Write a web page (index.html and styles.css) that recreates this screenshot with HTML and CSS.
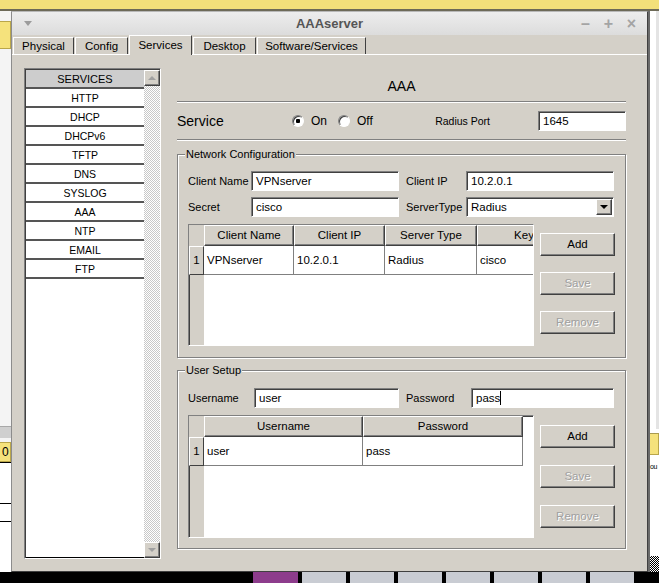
FILE: index.html
```html
<!DOCTYPE html>
<html lang="en">
<head>
    <meta charset="UTF-8">
    <title>AAAserver</title>
    <link rel="stylesheet" href="styles.css">
</head>
<body>
    <div class="topbar"></div>

    <div class="desk">
        <div class="side side-left">
            <div class="side-tag side-tag-top"></div>
            <div class="side-fill"></div>
            <div class="side-band"></div>
            <div class="side-tag">0</div>
            <div class="side-rest"></div>
        </div>

        <div class="window">
            <div class="titlebar">
                <div class="title-left"><span class="title-menu"></span></div>
                <div class="title-text">AAAserver</div>
                <div class="title-controls"><span>&ndash;</span><span>+</span><span>&times;</span></div>
            </div>

            <div class="tabs">
                <div class="tab tab-physical">Physical</div>
                <div class="tab tab-config">Config</div>
                <div class="tab tab-services active">Services</div>
                <div class="tab tab-desktop">Desktop</div>
                <div class="tab tab-software">Software/Services</div>
            </div>

            <div class="content">
                <!-- left service list -->
                <div class="service-list">
                    <div class="list">
                        <div class="list-head">SERVICES</div>
                        <div class="list-item">HTTP</div>
                        <div class="list-item">DHCP</div>
                        <div class="list-item">DHCPv6</div>
                        <div class="list-item">TFTP</div>
                        <div class="list-item">DNS</div>
                        <div class="list-item">SYSLOG</div>
                        <div class="list-item">AAA</div>
                        <div class="list-item">NTP</div>
                        <div class="list-item">EMAIL</div>
                        <div class="list-item">FTP</div>
                    </div>
                    <div class="scrollbar">
                        <div class="scroll-btn"><span class="arrow-up"></span></div>
                        <div class="scroll-btn"><span class="arrow-down"></span></div>
                    </div>
                </div>

                <!-- right settings panel -->
                <div class="panel">
                    <div class="panel-title">AAA</div>
                    <div class="sep"></div>

                    <div class="service-row">
                        <span class="service-label">Service</span>
                        <span class="radio checked"></span>
                        <span class="radio-text">On</span>
                        <span class="radio radio-off"></span>
                        <span class="radio-text">Off</span>
                        <span class="port-label">Radius Port</span>
                        <div class="field port-field">1645</div>
                    </div>
                    <div class="sep"></div>

                    <fieldset class="group group-network">
                        <legend>Network Configuration</legend>
                        <div class="form-row">
                            <span class="lbl lbl-net">Client Name</span>
                            <div class="field field-net">VPNserver</div>
                            <span class="lbl lbl-net2">Client IP</span>
                            <div class="field field-net">10.2.0.1</div>
                        </div>
                        <div class="form-row form-row-last">
                            <span class="lbl lbl-net">Secret</span>
                            <div class="field field-net">cisco</div>
                            <span class="lbl lbl-net2">ServerType</span>
                            <div class="field field-net select">
                                <span class="select-value">Radius</span>
                                <span class="select-btn"><span class="arrow-black"></span></span>
                            </div>
                        </div>
                        <div class="table-row">
                            <div class="grid grid-net">
                                <div class="grid-head">
                                    <div class="hc corner"></div>
                                    <div class="hc col-cname">Client Name</div>
                                    <div class="hc col-cip">Client IP</div>
                                    <div class="hc col-stype">Server Type</div>
                                    <div class="hc col-key">Key</div>
                                </div>
                                <div class="grid-row">
                                    <div class="rh">1</div>
                                    <div class="bc col-cname">VPNserver</div>
                                    <div class="bc col-cip">10.2.0.1</div>
                                    <div class="bc col-stype">Radius</div>
                                    <div class="bc col-key">cisco</div>
                                </div>
                            </div>
                            <div class="btn-col">
                                <div class="btn">Add</div>
                                <div class="btn disabled">Save</div>
                                <div class="btn disabled">Remove</div>
                            </div>
                        </div>
                    </fieldset>

                    <fieldset class="group group-user">
                        <legend>User Setup</legend>
                        <div class="form-row form-row-last">
                            <span class="lbl lbl-user">Username</span>
                            <div class="field field-user">user</div>
                            <span class="lbl lbl-user2">Password</span>
                            <div class="field field-pass">pass<span class="caret"></span></div>
                        </div>
                        <div class="table-row">
                            <div class="grid grid-user">
                                <div class="grid-head">
                                    <div class="hc corner"></div>
                                    <div class="hc col-user">Username</div>
                                    <div class="hc col-pass">Password</div>
                                </div>
                                <div class="grid-row">
                                    <div class="rh">1</div>
                                    <div class="bc col-user">user</div>
                                    <div class="bc col-pass">pass</div>
                                </div>
                            </div>
                            <div class="btn-col btn-col-user">
                                <div class="btn">Add</div>
                                <div class="btn disabled">Save</div>
                                <div class="btn disabled">Remove</div>
                            </div>
                        </div>
                    </fieldset>
                </div>
            </div>
        </div>

        <div class="side side-right">
            <div class="side-fill-right"></div>
            <div class="side-tag side-tag-right"></div>
            <div class="side-text">ou</div>
            <div class="side-rest-right"></div>
            <div class="side-checker"></div>
        </div>
    </div>

    <div class="taskbar">
        <div class="task-gap"></div>
        <div class="thumb thumb-purple"></div>
        <div class="thumb"></div>
        <div class="thumb"></div>
        <div class="thumb"></div>
        <div class="thumb"></div>
        <div class="thumb"></div>
        <div class="thumb"></div>
        <div class="thumb"></div>
    </div>
</body>
</html>
```

FILE: styles.css
```css
:root {
    --face: #d4d0c8;
    --shadow: #808080;
    --dark: #404040;
    --light: #ffffff;
    --text: #000000;
    --disabled: #a0a0a0;
}

* {
    margin: 0;
    padding: 0;
    box-sizing: border-box;
}

body {
    font-family: "Liberation Sans", Arial, sans-serif;
    font-size: 11px;
    color: var(--text);
    background: #000;
    width: 659px;
    height: 583px;
    overflow: hidden;
}

/* desktop around the window */
.topbar {
    height: 11px;
    background: #f3e07a;
    border-bottom: 2px solid #6d6a58;
}

.desk {
    display: flex;
    height: 561px;
}

.side {
    width: 11px;
    display: flex;
    flex-direction: column;
}

.side-left {
    background: #f4f4f4;
}

.side-tag {
    height: 20px;
    margin-top: 4px;
    background: #f5e27c;
    border: 1px solid #b9a64a;
    border-left: none;
    font-size: 12px;
    line-height: 18px;
    padding-left: 2px;
}

.side-tag-top {
    margin-top: 10px;
    height: 28px;
}

.side-fill {
    flex: 1;
}

.side-band {
    height: 12px;
    background: #cfcfcf;
    border-top: 1px solid #a8a8a8;
}

.side-rest {
    height: 110px;
    border-top: 1px solid #000;
    background: linear-gradient(#fff 40px, #000 40px, #000 41px, #fff 41px, #fff 58px, #000 58px, #000 59px, #fff 59px);
}

.side-right {
    background: #fff;
    border-left: 2px solid #6a6a6a;
}

.side-fill-right {
    height: 418px;
    background: linear-gradient(to right, #fff 6px, #e4e4e4 6px);
}

.side-tag-right {
    height: 22px;
    background: #f5e27c;
    border-top: 1px solid #a89a50;
}

.side-text {
    height: 30px;
    font-size: 7px;
    line-height: 24px;
    letter-spacing: -0.5px;
}

.side-rest-right {
    flex: 1;
}

.side-checker {
    height: 16px;
    background: repeating-conic-gradient(#000 0 25%, #fff 0 50%) 0 0 / 2px 2px;
}

.taskbar {
    display: flex;
    height: 11px;
    background: #000;
}

.task-gap {
    width: 253px;
}

.thumb {
    width: 44px;
    margin-right: 4px;
    background: #c9ccd3;
}

.thumb-purple {
    width: 45px;
    background: #8d3c8c;
}

/* window frame */
.window {
    width: 637px;
    display: flex;
    flex-direction: column;
    border: 1px solid;
    border-color: #b8b8b8 var(--dark) var(--dark) #8c8c8c;
    background: var(--face);
}

.titlebar {
    height: 23px;
    display: grid;
    grid-template-columns: 1fr auto 1fr;
    align-items: center;
    background: linear-gradient(#ededed, #dcdcdc);
}

.title-left {
    padding-left: 12px;
    display: flex;
    align-items: center;
}

.title-menu {
    width: 0;
    height: 0;
    border-left: 4px solid transparent;
    border-right: 4px solid transparent;
    border-top: 5px solid #9c9c9c;
}

.title-text {
    font-weight: 700;
    font-size: 13px;
    color: #555;
}

.title-controls {
    display: flex;
    justify-content: flex-end;
    gap: 12px;
    padding-right: 10px;
    color: #a4a4a4;
    font-size: 16px;
    font-weight: 700;
}

.title-controls span {
    width: 11px;
    text-align: center;
}

/* tabs */
.tabs {
    height: 20px;
    display: flex;
    align-items: flex-end;
    padding-left: 1px;
    border-bottom: 1px solid var(--light);
}

.tab {
    height: 17px;
    margin-right: 1px;
    border-top: 1px solid var(--light);
    border-left: 1px solid var(--light);
    border-right: 1px solid var(--dark);
    text-align: center;
    line-height: 17px;
    font-size: 11.5px;
}

.tab.active {
    height: 20px;
    margin-bottom: -1px;
    padding-top: 1px;
    background: var(--face);
    line-height: 16px;
}

.tab-physical { width: 61px; }
.tab-config { width: 53px; }
.tab-services { width: 63px; }
.tab-desktop { width: 63px; }
.tab-software { width: 109px; }

/* content */
.content {
    flex: 1;
    display: flex;
    gap: 16px;
    padding: 13px 0 0 12px;
}

.service-list {
    width: 137px;
    height: 491px;
    display: flex;
    padding: 1px 0 0 1px;
    border: 1px solid;
    border-color: var(--shadow) var(--light) var(--light) var(--shadow);
    box-shadow: inset 1px 1px 0 var(--dark);
}

.list {
    flex: 1;
    background: #fff;
    border-bottom: 1px solid #000;
}

.list-head,
.list-item {
    height: 19px;
    border-bottom: 2px solid #555;
    text-align: center;
    line-height: 18px;
    font-size: 10.5px;
}

.list-head {
    background: #cdcdcd;
    font-size: 11px;
}

.scrollbar {
    width: 16px;
    display: flex;
    flex-direction: column;
    justify-content: space-between;
    background: repeating-conic-gradient(#ffffff 0 25%, #c8c8c8 0 50%) 0 0 / 2px 2px;
}

.scroll-btn {
    height: 16px;
    display: flex;
    align-items: center;
    justify-content: center;
    background: var(--face);
    border: 1px solid;
    border-color: var(--light) var(--dark) var(--dark) var(--light);
    box-shadow: inset -1px -1px 0 var(--shadow);
}

.arrow-up,
.arrow-down {
    width: 0;
    height: 0;
    border-left: 4px solid transparent;
    border-right: 4px solid transparent;
}

.arrow-up {
    border-bottom: 4px solid var(--disabled);
}

.arrow-down {
    border-top: 4px solid var(--disabled);
}

/* right panel */
.panel {
    width: 449px;
    display: flex;
    flex-direction: column;
}

.panel-title {
    height: 33px;
    padding-top: 10px;
    text-align: center;
    font-size: 14px;
    line-height: 16px;
}

.sep {
    height: 2px;
    border-top: 1px solid var(--shadow);
    border-bottom: 1px solid var(--light);
}

.service-row {
    height: 36px;
    display: flex;
    align-items: center;
}

.service-label {
    width: 115px;
    font-size: 14px;
}

.radio {
    width: 12px;
    height: 12px;
    border-radius: 50%;
    border: 1px solid;
    border-color: var(--shadow) var(--light) var(--light) var(--shadow);
    box-shadow: inset 1px 1px 0 var(--dark);
    background: #fff;
}

.radio.checked {
    background: radial-gradient(circle, #000 0 2px, #fff 2.5px);
}

.radio-off {
    margin-left: 11px;
}

.radio-text {
    margin-left: 7px;
    font-size: 12px;
}

.port-label {
    margin-left: auto;
    margin-right: 48px;
    font-size: 10.5px;
}

.field {
    height: 20px;
    display: flex;
    align-items: center;
    padding: 0 4px;
    background: #fff;
    border: 1px solid;
    border-color: var(--shadow) var(--light) var(--light) var(--shadow);
    box-shadow: inset 1px 1px 0 var(--dark);
    font-size: 11.5px;
}

.port-field {
    width: 88px;
}

/* group boxes */
.group {
    min-width: 0;
    margin-top: 7px;
    padding: 10px 10px 11px 10px;
    border: 1px solid var(--shadow);
    box-shadow: 1px 1px 0 var(--light), inset 1px 1px 0 var(--light);
}

.group legend {
    margin-left: -3px;
    padding: 0 1px;
    background: var(--face);
    font-size: 11px;
    line-height: 13px;
}

.group-user {
    margin-top: 6px;
    padding-top: 11px;
    padding-bottom: 10px;
}

.form-row {
    height: 20px;
    display: flex;
    align-items: center;
    margin-bottom: 6px;
}

.form-row-last {
    margin-bottom: 7px;
}

.lbl-net { width: 63px; }
.lbl-net2 { width: 60px; margin-left: 7px; }
.field-net { width: 148px; }

.lbl-user { width: 66px; }
.lbl-user2 { width: 65px; margin-left: 7px; }
.field-user { width: 145px; }
.field-pass { width: 143px; }

.select {
    padding-right: 1px;
}

.select-value {
    flex: 1;
}

.select-btn {
    width: 16px;
    height: 16px;
    display: flex;
    align-items: center;
    justify-content: center;
    background: var(--face);
    border: 1px solid;
    border-color: var(--light) var(--dark) var(--dark) var(--light);
    box-shadow: inset -1px -1px 0 var(--shadow);
}

.arrow-black {
    width: 0;
    height: 0;
    border-left: 4px solid transparent;
    border-right: 4px solid transparent;
    border-top: 4px solid #000;
}

.caret {
    width: 1px;
    height: 14px;
    background: #000;
}

/* tables */
.table-row {
    display: flex;
    gap: 6px;
}

.grid {
    width: 346px;
    overflow: hidden;
    border: 1px solid;
    border-color: var(--shadow) var(--light) var(--light) var(--shadow);
    box-shadow: inset 1px 1px 0 var(--dark);
    background: linear-gradient(to right, var(--face) 15px, #fff 15px);
}

.grid-net { height: 122px; }
.grid-user { height: 123px; }

.grid-head,
.grid-row {
    display: flex;
}

.grid-head {
    height: 21px;
}

.grid-row {
    height: 29px;
}

.hc {
    flex-shrink: 0;
    background: var(--face);
    border: 1px solid;
    border-color: var(--light) var(--dark) var(--dark) var(--light);
    box-shadow: inset -1px -1px 0 var(--shadow);
    text-align: center;
    line-height: 18px;
    font-size: 11.5px;
}

.corner {
    width: 15px;
    border-color: var(--face) var(--face) var(--face) var(--face);
    box-shadow: none;
}

.rh {
    flex-shrink: 0;
    width: 15px;
    background: var(--face);
    border: 1px solid;
    border-color: var(--light) var(--dark) var(--dark) var(--light);
    text-align: center;
    line-height: 27px;
    font-size: 11.5px;
}

.bc {
    flex-shrink: 0;
    background: #fff;
    border-right: 1px solid var(--shadow);
    border-bottom: 1px solid var(--shadow);
    padding-left: 3px;
    line-height: 28px;
    font-size: 11.5px;
}

.col-cname { width: 90px; }
.col-cip { width: 91px; }
.col-stype { width: 92px; }
.col-key { width: 94px; }
.col-user { width: 159px; }
.col-pass { width: 160px; }

.btn-col {
    display: flex;
    flex-direction: column;
    gap: 16px;
    padding-top: 9px;
}

.btn-col-user {
    gap: 17px;
    padding-top: 10px;
}

.btn {
    width: 75px;
    height: 23px;
    background: var(--face);
    border: 1px solid;
    border-color: var(--light) var(--dark) var(--dark) var(--light);
    box-shadow: inset -1px -1px 0 var(--shadow);
    text-align: center;
    line-height: 20px;
    font-size: 11.5px;
}

.btn.disabled {
    color: var(--disabled);
    text-shadow: 1px 1px 0 var(--light);
}
```
